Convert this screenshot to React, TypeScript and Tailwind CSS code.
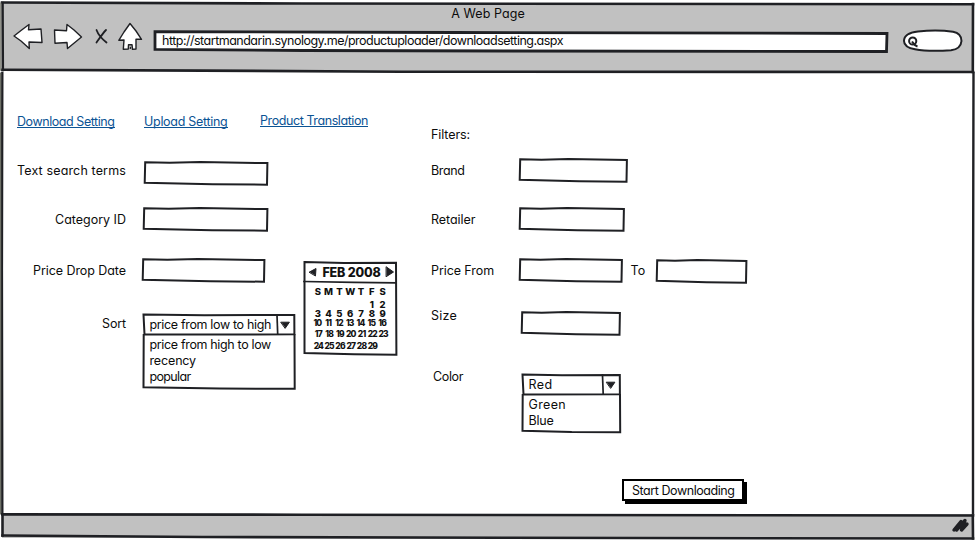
import { useLayoutEffect, useRef, type ReactNode } from "react";

const INK = "#1f2024";

/** Text whose tracking is adjusted so that it fills the given width. */
function Fit({ w, children, className = "" }: { w: number; children: string; className?: string }) {
  const ref = useRef<HTMLSpanElement>(null);
  useLayoutEffect(() => {
    const el = ref.current;
    if (!el) return;
    el.style.letterSpacing = "0px";
    const natural = el.getBoundingClientRect().width;
    const step = (w - natural) / children.length;
    el.style.letterSpacing = `${step}px`;
  }, [w, children]);
  return (
    <span ref={ref} className={`inline-block whitespace-pre ${className}`}>
      {children}
    </span>
  );
}

/** Pen strokes drawn over the edges of the parent. */
function Pen({ children, sw = 2 }: { children: ReactNode; sw?: number }) {
  return (
    <svg
      className="pointer-events-none absolute inset-0 h-full w-full overflow-visible"
      fill="none"
      stroke={INK}
      strokeWidth={sw}
      strokeLinecap="square"
    >
      {children}
    </svg>
  );
}

function TextBox({ w, label }: { w: number; label: string }) {
  return (
    <div className="relative h-[22px]" style={{ width: w }}>
      <Pen>
        <path d={`M0.2 0.2L${w * 0.2} 0.8L${w * 0.45} 0L${w - 0.6} 1.1L${w - 1} 22.7L${w * 0.55} 22.2L-0.3 20.8Z`} />
      </Pen>
      <input aria-label={label} className="relative h-full w-full bg-transparent px-1 outline-none" />
    </div>
  );
}

function Combo({ w, h, first, rest }: { w: number; h: number; first: [string, number]; rest: [string, number][] }) {
  return (
    <div className="relative pl-[6px]" style={{ width: w, height: h }}>
      <Pen>
        <path d={`M-0.5 0.5L${w * 0.4} 1.2L${w - 0.7} 1L${w - 0.6} 20.3L0.5 20.6Z`} />
        <path d={`M-0.3 21L-0.5 ${h - 1.7}L${w * 0.5} ${h - 0.4}L${w - 0.3} ${h - 0.2}L${w - 0.5} 21`} />
        <path d={`M${w - 18} 1L${w - 17.3} 20`} strokeWidth={1.7} />
        <path d={`M${w - 13.8} 8.2L${w - 5.6} 8.2L${w - 9.6} 14Z`} fill={INK} strokeWidth={1} />
      </Pen>
      <div className="h-[20px] pt-[3px]">
        <Fit w={first[1]}>{first[0]}</Fit>
      </div>
      <div className="flex flex-col pt-[3px]">
        {rest.map(([t, n]) => (
          <div key={t} className="h-4">
            <Fit w={n}>{t}</Fit>
          </div>
        ))}
      </div>
    </div>
  );
}

const WEEKS: { days: string[]; cls: string }[] = [
  { days: ["S", "M", "T", "W", "T", "F", "S"], cls: "mt-[5px] pl-[8px] text-[9.5px]" },
  { days: ["", "", "", "", "", "1", "2"], cls: "mt-[4px] pl-[8px] text-[9.5px]" },
  { days: ["3", "4", "5", "6", "7", "8", "9"], cls: "pl-[8px] text-[9.5px]" },
  { days: ["10", "11", "12", "13", "14", "15", "16"], cls: "mt-px pl-[8px] text-[8.5px]" },
  { days: ["17", "18", "19", "20", "21", "22", "23"], cls: "mt-[2px] pl-[9px] text-[8.5px]" },
  { days: ["24", "25", "26", "27", "28", "29", ""], cls: "mt-[3px] pl-[9px] text-[8.5px]" },
];

function Calendar() {
  return (
    <div className="relative h-[92px] w-[92px] font-extrabold text-[#111]">
      <Pen>
        <path d="M0.5 0L40 1L92 0.8L92.4 92.7L50 92.2L0.5 91Z" />
        <path d="M0 19.5L50 20.3L92 20.8" strokeWidth={1.7} />
        <path d="M5.5 10L12 6.5L11.5 13.5Z" fill={INK} strokeWidth={1} />
        <path d="M82.5 5L89.5 10L82.5 14.5Z" fill={INK} strokeWidth={1} />
      </Pen>
      <div className="h-5 pt-[3px] pl-[18.5px] text-[12.5px] leading-4">
        <Fit w={58}>FEB 2008</Fit>
      </div>
      {WEEKS.map(({ days, cls }, i) => (
        <div key={i} className={`flex h-[9px] leading-[9px] tracking-[-0.8px] ${cls}`}>
          {days.map((d, j) => (
            <span key={j} className="flex w-[10.8px] shrink-0 justify-center whitespace-nowrap">
              {d}
            </span>
          ))}
        </div>
      ))}
    </div>
  );
}

function Link({ w, children, className = "" }: { w: number; children: string; className?: string }) {
  return (
    <a className={`h-[14px] border-b border-[#0b5394] text-[#0b5394] ${className}`}>
      <Fit w={w}>{children}</Fit>
    </a>
  );
}

export default function App() {
  return (
    <div className="relative flex h-[540px] w-[976px] flex-col overflow-hidden bg-white font-['Inter','Liberation_Sans',sans-serif] text-[12.5px] leading-4 text-[#0c0c0c] [font-feature-settings:'cv11']">
      <header className="relative mx-[2px] mt-[3px] h-[68px] shrink-0 bg-[#c1c1c1]">
        <Pen sw={2.6}>
          <path d="M0 -0.5L300 0.5L971 1.2" />
          <path d="M0 66.8L200 67.6L400 68.7L971 69" />
          <path d="M0.5 0L0.8 67" />
          <path d="M971 1L970.8 69" />
          <path d="M-1.3 0L-1.3 67" stroke="#85877e" strokeWidth={1.2} />
        </Pen>
        <div className="flex h-[25px] justify-center pt-[3px]">
          <Fit w={73.5}>A Web Page</Fit>
        </div>
        <div className="flex">
          <svg
            className="-mt-[8px] h-[32px] w-[152px] shrink-0"
            viewBox="2 20 152 32"
            fill="#fff"
            stroke={INK}
            strokeWidth="1.4"
            strokeLinejoin="round"
            strokeLinecap="round"
          >
            <path d="M14 36L21 30.5L29 24.5L28.5 29.7L41 29L42 42.5L29 42L29.3 48.5L21 41Z" />
            <path d="M54.5 30L66.5 30.8L67 24.5L74 30L81.5 37L67.5 48.5L67 42.5L55 43.3Z" />
            <path d="M96.5 30C98 34 102 39 106.5 42.5M106 30C103 33 99 39 96.5 42.5" fill="none" strokeWidth="1.8" />
            <path d="M130 23.5L136 31L141.5 39.3L136 39.2L136 49L132.5 49.3L132 44.7L128.5 44.7L128.3 49L123.3 49.3L124 40L118.8 40.3L124 32Z" />
            <path d="M130.3 48.3L130.5 47.5" />
          </svg>
          <div className="relative mt-[4px] h-[18px] w-[733px] bg-white pt-[1px] pl-[8px]">
            <Pen sw={2.8}>
              <path d="M1 -0.4L300 0.5L733 1.5L732.5 19.5L350 19L150 18.5L1 17.3Z" />
            </Pen>
            <Fit w={401} className="relative">
              http://startmandarin.synology.me/productuploader/downloadsetting.aspx
            </Fit>
          </div>
          <svg className="ml-[15px] mt-px h-[24px] w-[61px]" viewBox="902 29 61 24" fill="none" stroke={INK} strokeWidth="2">
            <path
              d="M918 31.5C930 30.2 945 30.6 953 31.8C959 33 961.5 36 961.5 41C961 47 957 49.5 951 50.3C940 51 925 51.2 915 49.3C908 48 904 45 904 41C904 36 909 32.5 918 31.5Z"
              fill="#fff"
            />
            <circle cx="912.7" cy="41" r="3.6" />
            <path d="M912 41.5Q914.5 45.5 917.5 46.5" />
          </svg>
        </div>
      </header>

      <main className="relative flex h-[443px] shrink-0">
        <Pen sw={2.4}>
          <path d="M2.3 2L1.9 200L2.3 443" />
          <path d="M973.5 2L973 250L973 443" />
          <path d="M0.6 2L0.6 443" stroke="#6d7067" strokeWidth={1.2} />
        </Pen>
        <section className="w-[431px] shrink-0 pt-[43px]">
          <nav className="flex h-4 pl-[17px]">
            <Link w={97.5}>Download Setting</Link>
            <Link w={83.5} className="ml-[29.5px]">Upload Setting</Link>
            <Link w={108} className="-mt-px ml-[32.5px]">Product Translation</Link>
          </nav>
          <div className="mt-[24px] flex">
            <form className="w-[304px] shrink-0">
              <div className="flex h-[46px]">
                <div className="w-[126px] pt-[9px] text-right"><Fit w={109}>Text search terms</Fit></div>
                <div className="ml-[19px] pt-[8px]"><TextBox w={123} label="Text search terms" /></div>
              </div>
              <div className="flex h-[50px]">
                <div className="w-[126px] pt-[12px] text-right"><Fit w={71}>Category ID</Fit></div>
                <div className="ml-[18px] pt-[8px]"><TextBox w={124} label="Category ID" /></div>
              </div>
              <div className="flex h-[56px]">
                <div className="w-[126px] pt-[13px] text-right"><Fit w={93}>Price Drop Date</Fit></div>
                <div className="ml-[17px] pt-[9px]"><TextBox w={122} label="Price Drop Date" /></div>
              </div>
              <div className="flex">
                <div className="w-[126px] pt-[10px] text-right"><Fit w={24}>Sort</Fit></div>
                <div className="ml-[17.5px] pt-[8px]">
                  <Combo
                    w={151}
                    h={75}
                    first={["price from low to high", 121.5]}
                    rest={[["price from high to low", 121.5], ["recency", 46.5], ["popular", 41]]}
                  />
                </div>
              </div>
            </form>
            <div className="pt-[108px]"><Calendar /></div>
          </div>
        </section>

        <section className="flex-1 pt-[56px]">
          <h2 className="h-4"><Fit w={39}>Filters:</Fit></h2>
          <div className="flex h-[57px]">
            <div className="w-[88.5px] pt-[20px]"><Fit w={33.5}>Brand</Fit></div>
            <div className="pt-[16px]"><TextBox w={107.5} label="Brand" /></div>
          </div>
          <div className="flex h-[50px]">
            <div className="w-[88.5px] pt-[12px]"><Fit w={44.5}>Retailer</Fit></div>
            <div className="pt-[8px]"><TextBox w={104.5} label="Retailer" /></div>
          </div>
          <div className="flex h-[54px]">
            <div className="w-[88.5px] pt-[13px]"><Fit w={63}>Price From</Fit></div>
            <div className="pt-[9px]"><TextBox w={102.5} label="Price From" /></div>
            <div className="ml-[8.5px] w-[26.5px] pt-[13px]"><Fit w={15}>To</Fit></div>
            <div className="pt-[10px]"><TextBox w={90} label="Price To" /></div>
          </div>
          <div className="flex h-[62px]">
            <div className="w-[90.5px] pt-[4px]"><Fit w={26}>Size</Fit></div>
            <div className="pt-[8px]"><TextBox w={98.5} label="Size" /></div>
          </div>
          <div className="flex h-[113px]">
            <div className="w-[91.5px] pt-[3px] pl-[2px]"><Fit w={30}>Color</Fit></div>
            <div className="pt-[8px]">
              <Combo w={97.5} h={58.5} first={["Red", 24]} rest={[["Green", 37.5], ["Blue", 25]]} />
            </div>
          </div>
          <button className="relative ml-[191px] block h-[22px] w-[122px] border-2 border-black bg-white pl-[8px] text-left leading-[17px] shadow-[3px_3px_0_0_#000]">
            <Fit w={102.5}>Start Downloading</Fit>
          </button>
        </section>
      </main>

      <footer className="relative mx-[2px] h-[24px] shrink-0 bg-[#c1c1c1]">
        <Pen sw={2.6}>
          <path d="M0.5 0.4L300 0.7L500 1L971 1.5" />
          <path d="M0.5 21.5L200 23L500 23.8L971 24.5" />
          <path d="M0.5 0.5L0.5 21.5" />
          <path d="M970.8 1.5L971 24.5" />
          <path d="M952 16L959 7.5L954.5 16L963 6.5L959.5 16L965 10" strokeWidth={3.4} strokeLinecap="round" strokeLinejoin="round" />
        </Pen>
      </footer>
    </div>
  );
}
